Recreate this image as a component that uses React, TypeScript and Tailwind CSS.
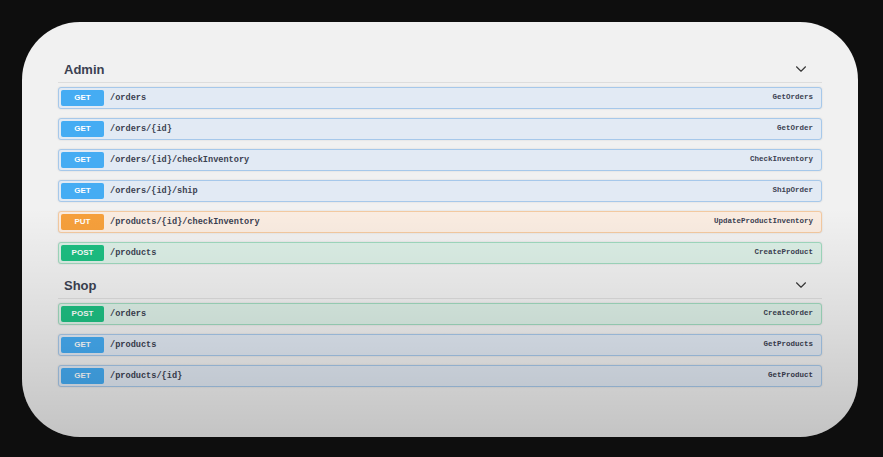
type Method = 'GET' | 'PUT' | 'POST';

interface Endpoint {
  method: Method;
  path: string;
  op: string;
}

const admin: Endpoint[] = [
  { method: 'GET', path: '/orders', op: 'GetOrders' },
  { method: 'GET', path: '/orders/{id}', op: 'GetOrder' },
  { method: 'GET', path: '/orders/{id}/checkInventory', op: 'CheckInventory' },
  { method: 'GET', path: '/orders/{id}/ship', op: 'ShipOrder' },
  { method: 'PUT', path: '/products/{id}/checkInventory', op: 'UpdateProductInventory' },
  { method: 'POST', path: '/products', op: 'CreateProduct' },
];

const shop: Endpoint[] = [
  { method: 'POST', path: '/orders', op: 'CreateOrder' },
  { method: 'GET', path: '/products', op: 'GetProducts' },
  { method: 'GET', path: '/products/{id}', op: 'GetProduct' },
];

const rowStyles: Record<Method, { row: string; badge: string }> = {
  GET: { row: 'bg-[#e2eaf4] border-[#a6c8ea]', badge: 'bg-[#45acf3]' },
  PUT: { row: 'bg-[#faece1] border-[#f3c9a0]', badge: 'bg-[#f6a03c]' },
  POST: { row: 'bg-[#dcefe6] border-[#9fd9be]', badge: 'bg-[#1dbf82]' },
};

function Chevron() {
  return (
    <svg className="w-[12px] h-[8px] text-[#3a3a3a]" viewBox="0 0 12 8" fill="none" stroke="currentColor">
      <path d="M1.5 1.8 6 6.2l4.5-4.4" strokeWidth={1.2} strokeLinecap="round" strokeLinejoin="round" />
    </svg>
  );
}

const mono = { fontFamily: '"Liberation Mono", "Courier New", monospace' };

function Row({ e }: { e: Endpoint }) {
  const s = rowStyles[e.method];
  return (
    <div className={`flex items-center h-[22px] rounded-[3px] border ${s.row} pl-[2px] pr-[8px] shadow-[0_0_2px_rgba(0,0,0,0.12)]`}>
      <span className={`w-[43px] h-[16px] rounded-[2px] ${s.badge} text-white text-[8px] font-semibold flex items-center justify-center`}>
        {e.method}
      </span>
      <span className="ml-[6px] text-[8.6px] font-bold text-[#3b4151]" style={mono}>
        {e.path}
      </span>
      <span className="ml-auto text-[7.5px] font-bold text-[#3b4151]" style={mono}>
        {e.op}
      </span>
    </div>
  );
}

function Tag({ name, items, first }: { name: string; items: Endpoint[]; first?: boolean }) {
  return (
    <div className={first ? '' : 'mt-[7px]'}>
      <div className="flex items-center h-[28px] border-b border-[#dddddd] pl-[6px] pr-[15px]">
        <span className="pt-[3px] text-[13px] font-bold text-[#3b4151]">{name}</span>
        <span className="ml-auto flex"><Chevron /></span>
      </div>
      <div className="mt-[4px] flex flex-col gap-[9px]">
        {items.map((e) => (
          <Row key={e.method + e.path} e={e} />
        ))}
      </div>
    </div>
  );
}

export default function App() {
  return (
    <div
      className="w-[883px] h-[457px] bg-[#0e0e0e] pt-[22px] pl-[22px]"
      style={{ fontFamily: '"Liberation Sans", Arial, sans-serif' }}
    >
      <div className="relative w-[836px] h-[415px] rounded-[58px] bg-[#f1f1f1] overflow-hidden px-[36px] pt-[33px]">
        <Tag name="Admin" items={admin} first />
        <Tag name="Shop" items={shop} />
        <div className="pointer-events-none absolute inset-0 bg-[linear-gradient(to_bottom,rgba(0,0,0,0)_45%,rgba(0,0,0,0.08)_70%,rgba(0,0,0,0.19)_100%)]" />
      </div>
    </div>
  );
}
